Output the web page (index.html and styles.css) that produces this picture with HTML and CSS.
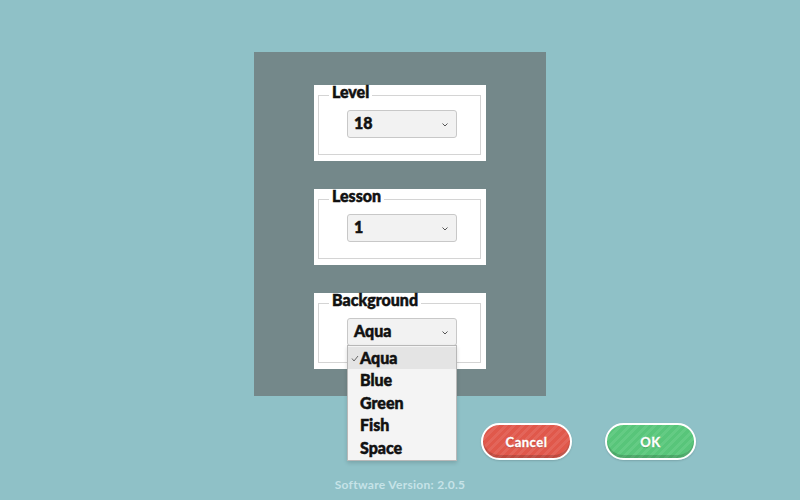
FILE: index.html
```html
<!DOCTYPE html>
<html lang="en">
  <head>
    <meta charset="UTF-8" />
    <meta name="viewport" content="width=device-width, initial-scale=1.0" />
    <title>Settings</title>
    <link rel="stylesheet" href="styles.css">
  </head>
  <body>
    <main class="screen">
      <section class="settings-panel">
        <div class="setting-card">
          <fieldset>
            <legend>Level</legend>
            <div class="picker">
              <span>18</span>
              <svg class="chevron" width="8" height="5" viewBox="0 0 8 5"><path d="M1.5 1.5l2.5 2.5 2.5-2.5" fill="none" stroke="#555" stroke-width="1"/></svg>
            </div>
          </fieldset>
        </div>
        <div class="setting-card">
          <fieldset>
            <legend>Lesson</legend>
            <div class="picker">
              <span>1</span>
              <svg class="chevron" width="8" height="5" viewBox="0 0 8 5"><path d="M1.5 1.5l2.5 2.5 2.5-2.5" fill="none" stroke="#555" stroke-width="1"/></svg>
            </div>
          </fieldset>
        </div>
        <div class="setting-card">
          <fieldset>
            <legend>Background</legend>
            <div class="picker picker-open">
              <span>Aqua</span>
              <svg class="chevron" width="8" height="5" viewBox="0 0 8 5"><path d="M1.5 1.5l2.5 2.5 2.5-2.5" fill="none" stroke="#555" stroke-width="1"/></svg>
              <ul class="picker-menu">
                <li class="selected">
                  <svg class="tick" width="8" height="7" viewBox="0 0 8 7"><path d="M1 3.5l2 2.5 4-5" fill="none" stroke="#666" stroke-width="1"/></svg>
                  Aqua
                </li>
                <li>Blue</li>
                <li>Green</li>
                <li>Fish</li>
                <li>Space</li>
              </ul>
            </div>
          </fieldset>
        </div>
      </section>

      <div class="actions">
        <button class="btn btn-cancel">Cancel</button>
        <button class="btn btn-ok">OK</button>
      </div>

      <p class="version">Software Version: 2.0.5</p>
    </main>
  </body>
</html>
```

FILE: styles.css
```css
body {
  margin: 0;
  height: 500px;
  overflow: hidden;
  background: #8fc1c7;
  font-family: "Lato", "Open Sans", sans-serif;
}
.screen {
  display: flex;
  flex-direction: column;
  align-items: center;
  padding-top: 52px;
}
.settings-panel {
  box-sizing: border-box;
  width: 292px;
  height: 344px;
  padding-top: 33px;
  background: #74888a;
  display: flex;
  flex-direction: column;
  align-items: center;
  gap: 28px;
}
.setting-card {
  box-sizing: border-box;
  width: 172px;
  height: 76px;
  padding: 0 5px 6px 4px;
  background: #ffffff;
  display: flex;
}
.setting-card fieldset {
  flex: 1;
  margin: 0;
  padding: 0;
  border: 1px solid #d4d4d4;
  min-width: 0;
}
/* legend text sits a little above the border line */
.setting-card legend {
  margin-left: 10px;
  padding: 0 3px 6px;
  font-size: 16px;
  font-weight: 900;
  line-height: 14px;
  color: #111;
  -webkit-text-stroke: 0.5px #111;
}
.picker {
  position: relative;
  box-sizing: border-box;
  width: 110px;
  height: 28px;
  margin: 5px 0 0 28px;
  padding: 0 7px 3px 6px;
  background: #f2f2f2;
  border: 1px solid #c8c8c8;
  border-radius: 3px;
  display: flex;
  align-items: center;
  justify-content: space-between;
  font-size: 16px;
  font-weight: 900;
  color: #111;
  -webkit-text-stroke: 0.5px #111;
}
.chevron {
  margin-top: 4px;
}
.picker-menu {
  position: absolute;
  top: 26px;
  left: -1px;
  box-sizing: border-box;
  width: 110px;
  margin: 0;
  padding: 1px 0;
  list-style: none;
  background: #f4f4f4;
  border: 1px solid #b8b8b8;
  box-shadow: 0 2px 4px rgba(0, 0, 0, 0.15);
  z-index: 5;
}
.picker-menu li {
  position: relative;
  height: 22.4px;
  line-height: 21px;
  padding-left: 12px;
}
.picker-menu li.selected {
  background: #e4e4e4;
}
.tick {
  position: absolute;
  left: 3px;
  top: 8px;
}
.actions {
  align-self: stretch;
  display: flex;
  gap: 33px;
  margin-top: 27px;
  padding-left: 481px;
}
.btn {
  width: 91px;
  height: 37px;
  border: 2px solid #ffffff;
  border-radius: 20px;
  font-family: "Lato", sans-serif;
  font-size: 13px;
  font-weight: 700;
  letter-spacing: 0.5px;
  color: #ffffff;
  -webkit-text-stroke: 0.3px #ffffff;
  text-shadow: 0 1px 1px rgba(0, 0, 0, 0.2);
  box-shadow: inset 0 -3px 0 rgba(0, 0, 0, 0.15), 0 1px 2px rgba(0, 0, 0, 0.15);
  cursor: pointer;
}
.btn-cancel {
  background: repeating-linear-gradient(135deg, #e0584b 0 3px, #e3655a 3px 6px);
}
.btn-ok {
  background: repeating-linear-gradient(135deg, #58c57a 0 3px, #64cb84 3px 6px);
}
.version {
  margin: 17px 0 0;
  font-size: 12px;
  font-weight: 700;
  color: #c6e3e7;
  letter-spacing: 0.3px;
}
```
